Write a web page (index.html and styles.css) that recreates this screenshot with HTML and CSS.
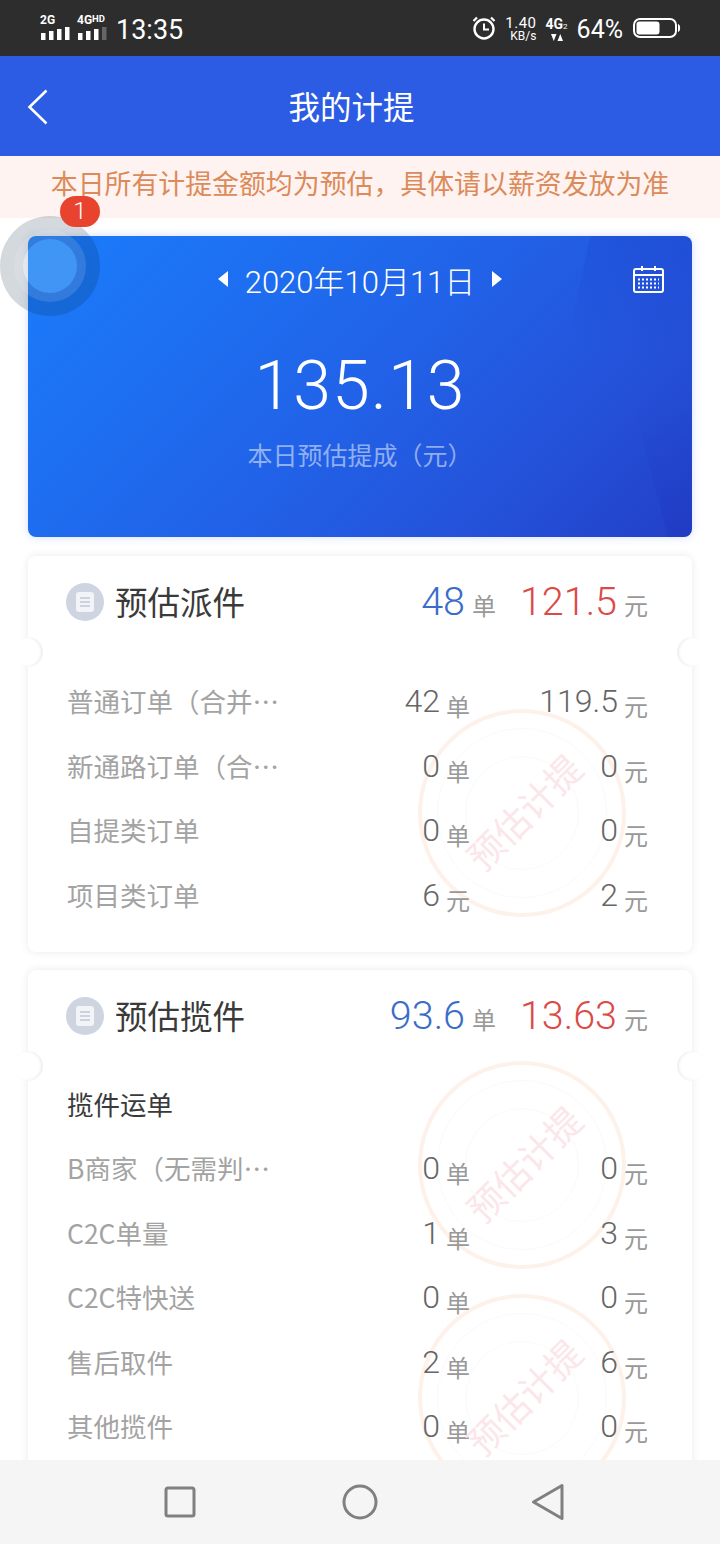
FILE: index.html
```html
<!DOCTYPE html>
<html lang="zh-CN">
<head>
    <meta charset="UTF-8">
    <meta name="viewport" content="width=device-width, initial-scale=1">
    <title>我的计提</title>
    <link rel="stylesheet" href="styles.css">
</head>
<body>
<div class="screen">
    <div class="statusbar">
        <div class="signal">
            <span class="net">2G</span>
            <svg width="30" height="13" viewBox="0 0 30 13"><path fill="#fff" d="M1 6h4.500v7H1zM9 4h4.500v9H9zM17 2h4.500v11H17zM25 0h4.500v13H25z"/></svg>
        </div>
        <div class="signal">
            <span class="net">4G<sup>HD</sup></span>
            <svg width="30" height="13" viewBox="0 0 30 13"><path fill="#fff" d="M1 6h4.500v7H1zM9 4h4.500v9H9zM17 2h4.500v11H17z"/><path fill="#666" d="M25 0h4.500v13H25z"/></svg>
        </div>
        <span class="clock">13:35</span>
        <div class="status-right">
            <svg class="alarm" width="24" height="24" viewBox="0 0 24 24" fill="none" stroke="#fff"><circle cx="12" cy="13" r="9.500" stroke-width="2.400"/><path stroke-width="2" d="M12 7.500V13.500H17"/><path stroke-width="2.200" d="M1.500 5 5 1.500M22.500 5 19 1.500"/></svg>
            <div class="speed"><span>1.40</span><span class="speed-unit">KB/s</span></div>
            <div class="net-4g">
                <span>4G<small>2</small></span>
                <svg width="12" height="7" viewBox="0 0 12 7"><path fill="#fff" d="M0 0h5.500L2.750 7zM12 7H6.500L9.250 0z"/></svg>
            </div>
            <span class="percent">64%</span>
            <svg class="battery" width="48" height="22" viewBox="0 0 48 22"><rect x="1" y="2" width="42" height="18" rx="6" fill="none" stroke="#fff" stroke-width="2"/><rect x="3.500" y="4.500" width="23" height="13" rx="3" fill="#fff"/><path d="M45.500 7.500c1.500 1 1.500 6 0 7z" fill="#fff" stroke="#fff"/></svg>
        </div>
    </div>

    <header class="topbar">
        <svg class="back" width="22" height="36" viewBox="0 0 22 36" fill="none" stroke="#fff" stroke-width="2.600"><path d="M19.500 1.500 2.500 18l17 16.500"/></svg>
        <h1>我的计提</h1>
    </header>
    <p class="notice">本日所有计提金额均为预估，具体请以薪资发放为准</p>

    <main class="content">
        <section class="hero">
            <div class="hero-shade"></div>
            <div class="hero-shade-low"></div>
            <svg class="calendar" width="32" height="28" viewBox="0 0 32 28" fill="none" stroke="#fff" stroke-width="2">
                <rect x="1" y="4" width="29" height="23" rx="2"/>
                <path d="M1 10h29M9 1v5M22 1v5"/>
                <path stroke-width="2" stroke-dasharray="2 2" d="M5 14.500h21M5 18.500h21M5 22.500h21"/>
            </svg>
            <div class="date-row">
                <span class="arrow arrow-left"></span>
                <span class="date">2020年10月11日</span>
                <span class="arrow arrow-right"></span>
            </div>
            <div class="amount">135.13</div>
            <div class="amount-label">本日预估提成（元）</div>
        </section>

        <section class="card card-one">
            <div class="stamp stamp-a"><span>预估计提</span></div>
            <div class="card-head">
                <span class="doc-icon"><svg width="18" height="20" viewBox="0 0 18 20"><rect width="18" height="20" rx="3" fill="#f2f4f8"/><path stroke="#ccd3e0" stroke-width="2" d="M4 6h10M4 10h10M4 14h10"/></svg></span>
                <h2>预估派件</h2>
                <span class="total total-orders"><b class="blue">48</b> <i>单</i></span>
                <span class="total total-money"><b class="red">121.5</b> <i>元</i></span>
            </div>
            <div class="row"><span class="name">普通订单（合并…</span><span class="val"><b>42</b><i>单</i></span><span class="val"><b>119.5</b><i>元</i></span></div>
            <div class="row"><span class="name">新通路订单（合…</span><span class="val"><b>0</b><i>单</i></span><span class="val"><b>0</b><i>元</i></span></div>
            <div class="row"><span class="name">自提类订单</span><span class="val"><b>0</b><i>单</i></span><span class="val"><b>0</b><i>元</i></span></div>
            <div class="row"><span class="name">项目类订单</span><span class="val"><b>6</b><i>元</i></span><span class="val"><b>2</b><i>元</i></span></div>
        </section>

        <section class="card card-two">
            <div class="stamp stamp-b"><span>预估计提</span></div>
            <div class="stamp stamp-c"><span>预估计提</span></div>
            <div class="card-head">
                <span class="doc-icon"><svg width="18" height="20" viewBox="0 0 18 20"><rect width="18" height="20" rx="3" fill="#f2f4f8"/><path stroke="#ccd3e0" stroke-width="2" d="M4 6h10M4 10h10M4 14h10"/></svg></span>
                <h2>预估揽件</h2>
                <span class="total total-orders"><b class="blue">93.6</b> <i>单</i></span>
                <span class="total total-money"><b class="red">13.63</b> <i>元</i></span>
            </div>
            <div class="subhead">揽件运单</div>
            <div class="row"><span class="name">B商家（无需判…</span><span class="val"><b>0</b><i>单</i></span><span class="val"><b>0</b><i>元</i></span></div>
            <div class="row"><span class="name">C2C单量</span><span class="val"><b>1</b><i>单</i></span><span class="val"><b>3</b><i>元</i></span></div>
            <div class="row"><span class="name">C2C特快送</span><span class="val"><b>0</b><i>单</i></span><span class="val"><b>0</b><i>元</i></span></div>
            <div class="row"><span class="name">售后取件</span><span class="val"><b>2</b><i>单</i></span><span class="val"><b>6</b><i>元</i></span></div>
            <div class="row"><span class="name">其他揽件</span><span class="val"><b>0</b><i>单</i></span><span class="val"><b>0</b><i>元</i></span></div>
        </section>
    </main>

    <nav class="navbar">
        <svg width="32" height="32" viewBox="0 0 32 32" fill="none" stroke="#808080" stroke-width="3"><rect x="2" y="2" width="28" height="28" rx="2"/></svg>
        <svg class="nav-home" width="36" height="36" viewBox="0 0 36 36" fill="none" stroke="#808080" stroke-width="3"><circle cx="18" cy="18" r="16"/></svg>
        <svg class="nav-back" width="34" height="38" viewBox="0 0 34 38" fill="none" stroke="#808080" stroke-width="3" stroke-linejoin="round"><path d="M31 2.500v33L2.500 19z"/></svg>
    </nav>

    <div class="ball">
        <div class="ball-mid"><div class="ball-core"></div></div>
    </div>
    <span class="ball-badge">1</span>
</div>
</body>
</html>
```

FILE: styles.css
```css
* {
    box-sizing: border-box;
}
body {
    margin: 0;
    background: #fff;
    font-family: "Noto Sans CJK SC", sans-serif;
    text-spacing-trim: space-all;
}
h1, h2, p {
    margin: 0;
    font-weight: normal;
}
i {
    font-style: normal;
}
b {
    font-family: Roboto, "Noto Sans CJK SC", sans-serif;
    font-weight: 300;
}
.screen {
    position: relative;
    display: flex;
    flex-direction: column;
    width: 720px;
    height: 1544px;
    overflow: hidden;
}

/* status bar */
.statusbar {
    display: flex;
    align-items: center;
    flex: none;
    height: 56px;
    padding: 0 40px;
    background: #2d2d2d;
    color: #fff;
    font-family: Roboto, sans-serif;
}
.signal {
    display: flex;
    flex-direction: column;
    width: 37px;
    height: 25px;
    margin-top: -2px;
}
.signal svg {
    display: block;
}
.net {
    height: 12px;
    font-size: 12px;
    font-weight: 700;
    line-height: 11px;
    white-space: nowrap;
}
.net sup {
    font-size: 9.500px;
    line-height: 0;
    vertical-align: 2px;
}
.clock {
    margin-top: 3px;
    margin-left: 2px;
    font-size: 27px;
}
.status-right {
    display: flex;
    align-items: center;
    margin-top: 2px;
    margin-left: auto;
}
.alarm {
    margin-top: -2px;
}
.speed {
    display: flex;
    flex-direction: column;
    align-items: flex-end;
    width: 31px;
    margin-left: 10px;
    font-size: 15px;
    line-height: 13px;
    letter-spacing: 0.5px;
}
.speed-unit {
    font-size: 12px;
    line-height: 12px;
    letter-spacing: 0;
}
.net-4g {
    display: flex;
    flex-direction: column;
    align-items: center;
    margin-left: 9px;
    font-size: 14px;
    font-weight: 700;
    line-height: 15px;
}
.net-4g small {
    font-size: 8px;
    font-weight: 400;
}
.percent {
    margin-left: 9px;
    font-size: 25px;
}
.battery {
    margin-left: 10px;
    margin-right: -1px;
    margin-top: -2px;
}

/* header */
.topbar {
    position: relative;
    display: flex;
    align-items: center;
    justify-content: center;
    flex: none;
    height: 100px;
    padding-right: 17px;
    padding-bottom: 2px;
    background: #2b5ce3;
}
.topbar h1 {
    color: #fff;
    font-size: 31.500px;
}
.back {
    position: absolute;
    left: 27px;
    top: 33px;
}
.notice {
    flex: none;
    height: 62px;
    background: #fef3f0;
    color: #dc8a5a;
    font-size: 26.900px;
    line-height: 54px;
    text-align: center;
}

/* content */
.content {
    display: flex;
    flex-direction: column;
    gap: 18px;
    flex: 1;
    min-height: 0;
    padding: 18px 28px 0;
    overflow: hidden;
}
.hero {
    position: relative;
    flex: none;
    height: 301px;
    margin-bottom: 1px;
    padding-top: 21px;
    overflow: hidden;
    border-radius: 8px;
    background: linear-gradient(135deg, #1a7dfb 0%, #2162e8 50%, #2453da 75%, #233fc8 100%);
    box-shadow: 0 0 10px rgba(40, 90, 220, 0.2);
    color: #fff;
    text-align: center;
}
.hero-shade {
    position: absolute;
    top: 0;
    right: 0;
    width: 130px;
    height: 130px;
    background: linear-gradient(190deg, rgba(20, 50, 190, 0.22), rgba(20, 50, 190, 0) 85%);
    clip-path: polygon(22% 0, 100% 0, 100% 100%, 0 100%);
}
.hero-shade-low {
    position: absolute;
    bottom: 0;
    right: 0;
    width: 60px;
    height: 140px;
    background: linear-gradient(to top, rgba(20, 40, 170, 0.18), rgba(20, 40, 170, 0));
    clip-path: polygon(0 0, 100% 0, 100% 100%, 60% 100%);
}
.calendar {
    position: absolute;
    top: 29px;
    right: 27px;
}
.date-row {
    position: relative;
    display: flex;
    align-items: center;
    justify-content: center;
    height: 44px;
}
.date {
    margin: 0 17px;
    font-family: Roboto, "Noto Sans CJK SC", sans-serif;
    font-size: 31px;
    font-weight: 300;
}
.arrow {
    width: 0;
    height: 0;
    border-top: 8px solid transparent;
    border-bottom: 8px solid transparent;
}
.arrow-left {
    border-right: 10px solid #fff;
}
.arrow-right {
    border-left: 10px solid #fff;
}
.amount {
    position: relative;
    margin-top: 41px;
    font-family: Roboto, sans-serif;
    font-size: 68px;
    font-weight: 300;
    line-height: 88px;
    letter-spacing: 1px;
}
.amount-label {
    position: relative;
    margin-top: 6px;
    color: rgba(255, 255, 255, 0.5);
    font-size: 25px;
    line-height: 36px;
}

.card {
    position: relative;
    flex: none;
    padding: 24px 44px 25px 40px;
    border-radius: 8px;
    background: #fff;
    box-shadow: 0 0 8px rgba(0, 0, 0, 0.09);
}
.card::before,
.card::after {
    content: "";
    position: absolute;
    top: 81px;
    width: 30px;
    height: 30px;
    border-radius: 50%;
    background: #fff;
}
.card::before {
    left: -15px;
    box-shadow: inset -2px 0 3px rgba(0, 0, 0, 0.07);
}
.card::after {
    right: -15px;
    box-shadow: inset 2px 0 3px rgba(0, 0, 0, 0.07);
}
.card-head {
    position: relative;
    display: flex;
    align-items: center;
    height: 44px;
    margin-bottom: 45px;
}
.doc-icon {
    display: flex;
    align-items: center;
    justify-content: center;
    width: 38px;
    height: 38px;
    margin-left: -2px;
    border-radius: 50%;
    background: #ced5e1;
}
.card-head h2 {
    margin-top: -2px;
    margin-left: 11px;
    color: #3a3a3a;
    font-size: 32.500px;
    line-height: 44px;
}
.total {
    display: flex;
    align-items: baseline;
    gap: 7px;
    white-space: nowrap;
}
.total b {
    font-size: 39.500px;
    line-height: 44px;
}
.total i {
    color: #999;
    font-size: 24px;
}
.total-orders {
    margin-left: auto;
}
.total-money {
    width: 152px;
    justify-content: flex-end;
}
.blue {
    color: #3a6cc8;
}
.red {
    color: #dc4a48;
}
.subhead {
    position: relative;
    margin-top: -11px;
    margin-left: -1px;
    color: #3a3a3a;
    font-size: 26.500px;
    line-height: 64px;
}
.row {
    position: relative;
    display: grid;
    grid-template-columns: 1fr 130px 178px;
    align-items: baseline;
    height: 64.500px;
    line-height: 64px;
}
.name {
    margin-left: -1px;
    color: #a3a3a3;
    font-size: 26.500px;
    white-space: nowrap;
}
.val {
    text-align: right;
    white-space: nowrap;
}
.val b {
    color: #666;
    font-size: 32px;
}
.val i {
    margin-left: 6px;
    color: #999;
    font-size: 24px;
    vertical-align: -4px;
}

/* watermark stamp */
.stamp {
    position: absolute;
    right: 66px;
    display: flex;
    align-items: center;
    justify-content: center;
    width: 208px;
    height: 208px;
    border: 4px solid #fdf1ea;
    border-radius: 50%;
    background: #fff;
}
.stamp::before,
.stamp::after {
    content: "";
    position: absolute;
    border: 1px solid #fafafa;
    border-radius: 50%;
}
.stamp::before {
    inset: 15px;
}
.stamp::after {
    inset: 43px;
}
.stamp span {
    position: relative;
    z-index: 1;
    margin-top: -4px;
    margin-left: 2px;
    color: #fbe6ea;
    font-size: 36px;
    white-space: nowrap;
    transform: rotate(-45deg);
}
.stamp-a {
    top: 153px;
}
.stamp-b {
    top: 91px;
}
.stamp-c {
    top: 324px;
}

/* bottom nav */
.navbar {
    position: relative;
    display: flex;
    align-items: center;
    flex: none;
    height: 84px;
    padding-left: 164px;
    background: #f5f5f5;
}
.nav-home {
    margin-left: 146px;
}
.nav-back {
    margin-left: 153px;
}

/* floating ball */
.ball {
    position: absolute;
    left: 0;
    top: 216px;
    display: flex;
    align-items: center;
    justify-content: center;
    width: 100px;
    height: 100px;
    border-radius: 50%;
    background: rgba(0, 30, 60, 0.17);
}
.ball-mid {
    display: flex;
    align-items: center;
    justify-content: center;
    width: 72px;
    height: 72px;
    border-radius: 50%;
    background: rgba(255, 255, 255, 0.12);
}
.ball-core {
    width: 54px;
    height: 54px;
    border-radius: 50%;
    background: linear-gradient(90deg, rgba(255, 255, 255, 0.4) 5px, rgba(70, 160, 255, 0.7) 5px);
}
.ball-badge {
    position: absolute;
    left: 60px;
    top: 196px;
    width: 40px;
    height: 31px;
    border-radius: 16px;
    background: #e8432f;
    color: #fff;
    font-family: Roboto, sans-serif;
    font-size: 24px;
    font-weight: 300;
    line-height: 31px;
    text-align: center;
}
```
